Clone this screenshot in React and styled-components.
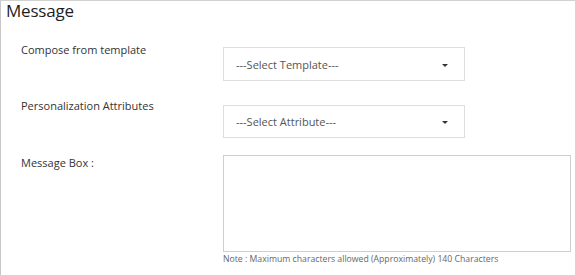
import React from 'react';
import styled, { createGlobalStyle } from 'styled-components';

const GlobalStyle = createGlobalStyle`
  body {
    margin: 0;
    font-family: "Open Sans", "Noto Sans", Arial, sans-serif;
    background: #fff;
  }
`;

const Panel = styled.section`
  width: 575px;
  height: 275px;
  box-sizing: border-box;
  border-top: 1px solid #d2d2d2;
  border-left: 1px solid #c8c8c8;
`;

const Title = styled.h2`
  margin: 0;
  padding: 0 5px;
  font-size: 17px;
  line-height: 20px;
  font-weight: 400;
  letter-spacing: -0.2px;
  color: #1e1e1e;
`;

const Form = styled.form`
  display: flex;
  flex-direction: column;
  gap: 17px;
  padding: 21px 0 0 20px;
`;

const Row = styled.div`
  display: grid;
  grid-template-columns: 202px 1fr;
  align-items: start;
`;

const Label = styled.label`
  font-size: 11px;
  line-height: 16px;
  color: #333;
`;

const Control = styled.div`
  margin-top: ${props => props.offset || 0}px;
`;

const Select = styled.div`
  width: 242px;
  height: ${props => props.height}px;
  box-sizing: border-box;
  border: 1px solid #dedede;
  display: flex;
  align-items: center;
  justify-content: space-between;
  padding: 0 16px 0 12px;
  font-size: 11px;
  color: #555;
`;

const Caret = styled.span`
  width: 0;
  height: 0;
  margin-top: 2px;
  border-left: 3px solid transparent;
  border-right: 3px solid transparent;
  border-top: 3px solid #333;
`;

const TextArea = styled.textarea`
  display: block;
  width: 348px;
  height: 97px;
  box-sizing: border-box;
  border: 1px solid #cfcfcf;
  resize: none;
  outline: none;
  margin: 0;
`;

const Note = styled.div`
  margin-top: 1px;
  font-size: 8.7px;
  line-height: 12px;
  color: #666;
`;

function App() {
  return (
    <>
      <GlobalStyle />
      <Panel>
        <Title>Message</Title>
        <Form>
          <Row>
            <Label>Compose from template</Label>
            <Control offset={5}>
              <Select height={34}>
                ---Select Template---
                <Caret />
              </Select>
            </Control>
          </Row>
          <Row>
            <Label>Personalization Attributes</Label>
            <Control offset={7}>
              <Select height={33}>
                ---Select Attribute---
                <Caret />
              </Select>
            </Control>
          </Row>
          <Row>
            <Label>Message Box :</Label>
            <Control>
              <TextArea />
              <Note>Note : Maximum characters allowed (Approximately) 140 Characters</Note>
            </Control>
          </Row>
        </Form>
      </Panel>
    </>
  );
}

export default App;
